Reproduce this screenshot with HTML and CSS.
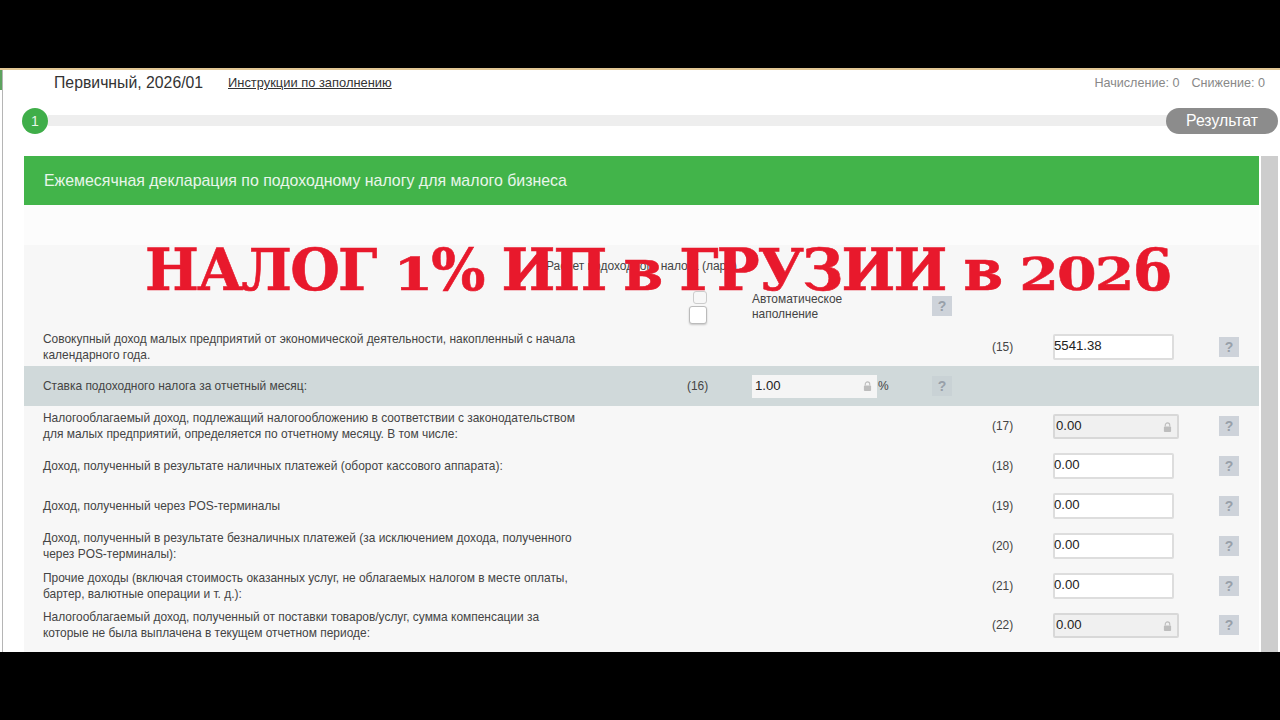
FILE: index.html
```html
<!DOCTYPE html>
<html lang="ru">
<head>
    <meta charset="UTF-8">
    <meta name="viewport" content="width=device-width, initial-scale=1.0">
    <title>Налог 1% ИП в Грузии</title>
    <link rel="stylesheet" href="styles.css">
</head>
<body>
    <svg class="icon-defs" width="0" height="0">
        <symbol id="lock" viewBox="0 0 10 11">
            <path d="M2.5 5V3.4a2.5 2.5 0 0 1 5 0V5" fill="none" stroke="currentColor" stroke-width="1.2"/>
            <rect x="1" y="5" width="8" height="6" rx="1" fill="currentColor"/>
        </symbol>
    </svg>
    <div class="app">
        <div class="app-strip"></div>
        <div class="top-bar">
            <span class="period">Первичный, 2026/01</span>
            <a class="instructions" href="#">Инструкции по заполнению</a>
            <span class="totals"><span>Начисление: 0</span><span>Снижение: 0</span></span>
        </div>
        <div class="progress">
            <span class="step">1</span>
            <span class="track"></span>
            <span class="result-btn">Результат</span>
        </div>
        <div class="content">
            <div class="panel">
                <div class="panel-title">Ежемесячная декларация по подоходному налогу для малого бизнеса</div>
                <div class="panel-gap"></div>
                <div class="section-title">Расчет подоходного налога (лари)</div>
                <div class="row row-auto">
                    <div class="checks"><span class="check-small"></span><span class="check-big"></span></div>
                    <div class="auto-label">Автоматическое<br>наполнение</div>
                    <span class="help help-mid">?</span>
                </div>
                <div class="row row-first">
                    <div class="label">Совокупный доход малых предприятий от экономической деятельности, накопленный с начала календарного года.</div>
                    <span class="num">(15)</span>
                    <div class="field">5541.38</div>
                    <span class="help">?</span>
                </div>
                <div class="row row-rate">
                    <div class="label">Ставка подоходного налога за отчетный месяц:</div>
                    <span class="num-mid">(16)</span>
                    <div class="rate"><div class="field-rate">1.00<svg class="lock"><use href="#lock"/></svg></div><span class="percent">%</span></div>
                    <span class="help help-mid">?</span>
                </div>
                <div class="row">
                    <div class="label">Налогооблагаемый доход, подлежащий налогообложению в соответствии с законодательством для малых предприятий, определяется по отчетному месяцу. В том числе:</div>
                    <span class="num">(17)</span>
                    <div class="field field-locked">0.00<svg class="lock"><use href="#lock"/></svg></div>
                    <span class="help">?</span>
                </div>
                <div class="row">
                    <div class="label">Доход, полученный в результате наличных платежей (оборот кассового аппарата):</div>
                    <span class="num">(18)</span>
                    <div class="field">0.00</div>
                    <span class="help">?</span>
                </div>
                <div class="row">
                    <div class="label">Доход, полученный через POS-терминалы</div>
                    <span class="num">(19)</span>
                    <div class="field">0.00</div>
                    <span class="help">?</span>
                </div>
                <div class="row">
                    <div class="label">Доход, полученный в результате безналичных платежей (за исключением дохода, полученного через POS-терминалы):</div>
                    <span class="num">(20)</span>
                    <div class="field">0.00</div>
                    <span class="help">?</span>
                </div>
                <div class="row row-tight">
                    <div class="label">Прочие доходы (включая стоимость оказанных услуг, не облагаемых налогом в месте оплаты, бартер, валютные операции и т. д.):</div>
                    <span class="num">(21)</span>
                    <div class="field">0.00</div>
                    <span class="help">?</span>
                </div>
                <div class="row">
                    <div class="label">Налогооблагаемый доход, полученный от поставки товаров/услуг, сумма компенсации за которые не была выплачена в текущем отчетном периоде:</div>
                    <span class="num">(22)</span>
                    <div class="field field-locked">0.00<svg class="lock"><use href="#lock"/></svg></div>
                    <span class="help">?</span>
                </div>
            </div>
            <div class="scrollbar"></div>
        </div>
        <div class="headline">НАЛОГ <span class="old">1</span>% ИП в ГРУЗИИ в <span class="old">202</span>6</div>
    </div>
</body>
</html>
```

FILE: styles.css
```css
* {
    margin: 0;
    padding: 0;
    box-sizing: border-box;
}
body {
    background-color: #000;
    font-family: 'Liberation Sans', Arial, sans-serif;
    height: 720px;
    overflow: hidden;
    padding-top: 68px;
}
.icon-defs {
    display: block;
    height: 0;
}
.app {
    position: relative;
    height: 584px;
    overflow: hidden;
    background-color: #fff;
    border-top: 2px solid #e2c795;
    padding-left: 24px;
}
.app::before {
    content: '';
    position: absolute;
    left: 2px;
    top: 0;
    bottom: 0;
    width: 1px;
    background-color: #b5b5b5;
}
.app-strip {
    position: absolute;
    left: 0;
    top: 0;
    width: 2px;
    height: 20px;
    background-color: #5da35f;
}
.top-bar {
    display: flex;
    align-items: center;
    height: 25px;
    padding-left: 30px;
    color: #333;
}
.period {
    font-size: 15.8px;
    width: 174px;
}
.instructions {
    font-size: 12.9px;
    color: #333;
}
.totals {
    margin-left: auto;
    margin-right: 15px;
    display: flex;
    gap: 12px;
    font-size: 12.6px;
    color: #888;
}
.progress {
    display: flex;
    align-items: center;
    height: 26px;
    margin-top: 13px;
    margin-left: -2px;
}
.step {
    flex: none;
    width: 26px;
    height: 26px;
    border-radius: 50%;
    background-color: #3fae49;
    color: #e8f5e9;
    font-size: 14px;
    line-height: 26px;
    text-align: center;
    position: relative;
}
.track {
    flex: 1;
    height: 11px;
    background-color: #eee;
    margin-right: -4px;
    margin-bottom: 1px;
}
.result-btn {
    flex: none;
    width: 112px;
    height: 26px;
    margin-right: 2px;
    border-radius: 13px;
    background-color: #8c8c8c;
    color: #fff;
    font-size: 15.8px;
    line-height: 25px;
    text-align: center;
    position: relative;
}
.content {
    display: flex;
    margin-top: 22px;
    gap: 2px;
}
.panel {
    width: 1235px;
    background-color: #f7f7f7;
}
.scrollbar {
    width: 17px;
    background-color: #cdcdcd;
    height: 500px;
}
.panel-title {
    height: 49px;
    padding-left: 20px;
    background-color: #42b44a;
    color: #e9f6ea;
    font-size: 15.9px;
    line-height: 50px;
}
.panel-gap {
    height: 40px;
    background-color: #fcfcfc;
}
.section-title {
    height: 40px;
    padding-left: 522px;
    padding-top: 14px;
    font-size: 12px;
    color: #444;
}
.row {
    display: grid;
    grid-template-columns: 644px 65px 180px 60px 61px 166px 40px;
    align-items: center;
    height: 40px;
    padding-left: 19px;
    font-size: 11.95px;
    color: #444;
}
.row-auto {
    height: 41px;
}
.row-first {
    padding-top: 2px;
}
.row-tight {
    height: 39px;
}
.row-rate {
    background-color: #d0d9da;
}
.label {
    grid-column: 1;
    width: 540px;
    line-height: 16px;
}
.num-mid {
    grid-column: 2;
}
.num {
    grid-column: 5;
}
.rate {
    grid-column: 3;
    display: flex;
    align-items: center;
}
.checks {
    grid-column: 1 / 3;
    justify-self: end;
    margin-right: 45px;
    margin-top: 3px;
    display: flex;
    flex-direction: column;
    align-items: flex-end;
    gap: 2px;
}
.check-small {
    width: 14px;
    height: 13px;
    border: 1px solid #ccc;
    border-radius: 3px;
}
.check-big {
    width: 18px;
    height: 18px;
    background-color: #fff;
    border: 1px solid #bbb;
    border-radius: 3px;
    box-shadow: 0 1px 2px rgba(0, 0, 0, 0.2);
}
.auto-label {
    grid-column: 3;
    line-height: 15px;
    padding-top: 2px;
}
.help {
    grid-row: 1;
    grid-column: 7;
    width: 20px;
    height: 20px;
    background-color: #ced3da;
    color: #98a0a9;
    font-size: 14px;
    font-weight: bold;
    line-height: 20px;
    text-align: center;
}
.help-mid {
    grid-column: 4;
}
.row-rate .help {
    background-color: #c9d2d5;
}
.field {
    grid-column: 6;
    width: 121px;
    height: 26px;
    background-color: #fff;
    border: 2px solid #ddd;
    border-radius: 2px;
    color: #222;
    font-size: 13.2px;
    line-height: 20px;
    text-indent: -1px;
}
.field-locked {
    position: relative;
    width: 126px;
    height: 25px;
    background-color: #f0f0f0;
    border: 2px solid #d8d8d8;
    text-indent: 1px;
}
.field-rate {
    position: relative;
    width: 125px;
    height: 23px;
    padding-left: 3px;
    background-color: #f5f5f5;
    color: #222;
    font-size: 13.2px;
    line-height: 22px;
}
.percent {
    margin-left: 1px;
    font-size: 12px;
}
.lock {
    position: absolute;
    right: 5px;
    top: 6px;
    width: 9px;
    height: 10px;
    color: #bdbdbd;
}
.headline {
    position: absolute;
    left: 145px;
    top: 175px;
    color: #e8192c;
    font-family: 'DejaVu Serif', 'Liberation Serif', serif;
    font-size: 57px;
    font-weight: bold;
    line-height: 50px;
    letter-spacing: -1.85px;
    -webkit-text-stroke: 0.6px #e8192c;
    white-space: nowrap;
}
/* old-style digits, the font has only lining ones */
.old {
    display: inline-block;
    transform: scaleY(0.8);
    transform-origin: 50% 45px;
}
```
